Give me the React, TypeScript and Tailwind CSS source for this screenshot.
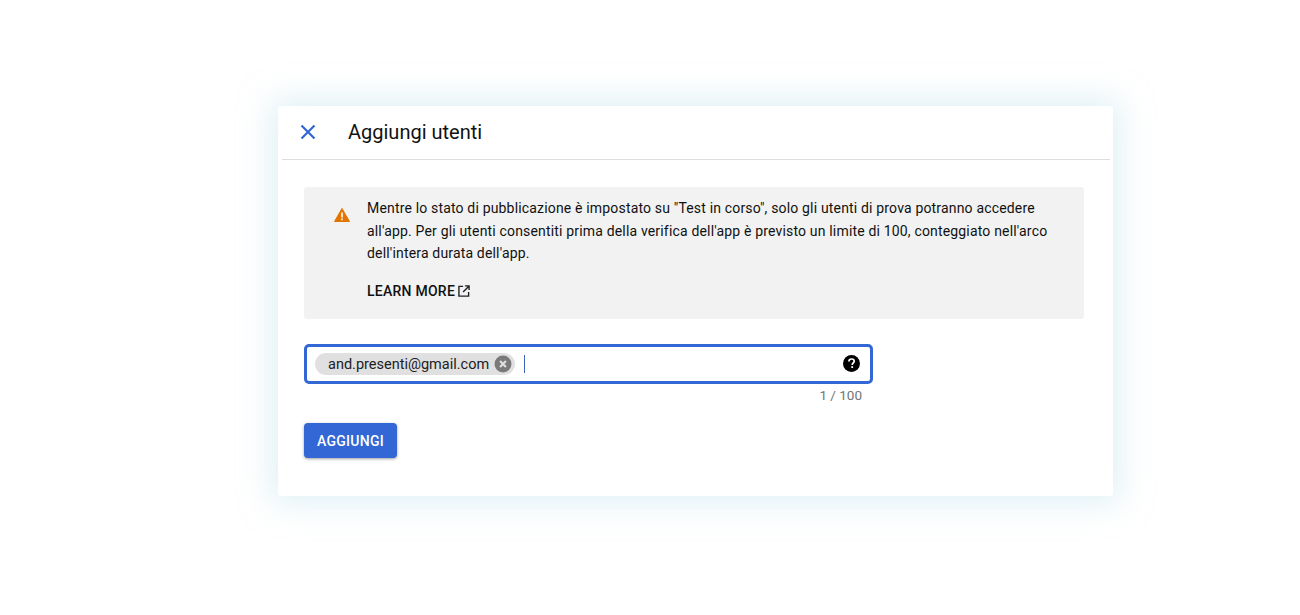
export default function App() {
  return (
    <div className="min-h-[615px] bg-white pt-[106px] pl-[278px] font-['Roboto',sans-serif] overflow-hidden">
      <div className="w-[835px] h-[390px] bg-white rounded-[3px] shadow-[0_0_32px_6px_rgba(190,226,238,0.5)]">
        {/* header */}
        <div className="ml-[4px] mr-[3px] h-[54px] border-b border-[#dedede] flex items-center pb-[2px]">
          <svg className="ml-[16px] w-[20px] h-[20px]" viewBox="0 0 20 20" fill="none" stroke="#3367d6" strokeWidth="2.2">
            <path d="M3.5 3.5 L16.5 16.5 M16.5 3.5 L3.5 16.5" />
          </svg>
          <h1 className="ml-[30px] text-[20px] leading-[26px] text-[#111111]">Aggiungi utenti</h1>
        </div>

        <div className="px-[26px] pt-[27px]">
          {/* warning box */}
          <div className="w-[780px] h-[132px] bg-[#f2f2f2] rounded-[3px] flex pl-[29px] pt-[10px]">
            <svg className="mt-[10px] w-[18px] h-[16px] shrink-0" viewBox="0 0 18 16">
              <path d="M9 1.5 L16.5 14.5 H1.5 Z" fill="#e37400" stroke="#e37400" strokeLinejoin="round" />
              <rect x="8.2" y="5.5" width="1.6" height="5" fill="#fff" />
              <rect x="8.2" y="11.5" width="1.6" height="1.7" fill="#fff" />
            </svg>
            <div className="ml-[16px] w-[690px]">
              <p className="text-[14px] leading-[22.5px] tracking-[0.17px] text-[#111111]">
                Mentre lo stato di pubblicazione è impostato su "Test in corso", solo gli utenti di prova potranno accedere all'app. Per gli utenti consentiti prima della verifica dell'app è previsto un limite di 100, conteggiato nell'arco dell'intera durata dell'app.
              </p>
              <div className="mt-[16px] flex items-center text-[14px] leading-[20px] tracking-[0.25px] font-medium text-[#111111]">
                LEARN MORE
                <svg className="ml-[3px] w-[12px] h-[12px]" viewBox="0 0 13 13" fill="none" stroke="#202124" strokeWidth="1.5">
                  <path d="M5.5 1.5 H1 V12 H11.5 V7.5 M7.5 1 H12 V5.5 M12 1 L5.5 7.5" />
                </svg>
              </div>
            </div>
          </div>

          {/* chip input */}
          <div className="mt-[25px] w-[569px] h-[40px] border-[3px] border-[#3367d6] rounded-[5px] flex items-center pl-[8px] pr-[10px]">
            <div className="h-[22px] pl-[13px] pr-[3px] bg-[#e0e0e0] rounded-full flex items-center">
              <span className="text-[14.5px] leading-[22px] pt-[1px] text-[#202124] whitespace-nowrap">and.presenti@gmail.com</span>
              <svg className="ml-[5px] w-[18px] h-[18px]" viewBox="0 0 17 17">
                <circle cx="8.5" cy="8.5" r="8" fill="#7a7a7a" />
                <path d="M5.7 5.7 L11.3 11.3 M11.3 5.7 L5.7 11.3" stroke="#e0e0e0" strokeWidth="2" />
              </svg>
            </div>
            <div className="ml-[9px] w-px h-[18px] bg-[#3f63b8]" />
            <svg className="ml-auto mb-[2px] w-[17px] h-[17px]" viewBox="0 0 17 17">
              <circle cx="8.5" cy="8.5" r="8.5" fill="#000" />
              <path d="M5.9 6.6 C5.9 5 7.1 4 8.6 4 C10.1 4 11.2 5 11.2 6.3 C11.2 7.9 9.2 8.1 9.2 9.9" fill="none" stroke="#fff" strokeWidth="1.7" />
              <rect x="8.3" y="11.2" width="1.8" height="1.8" fill="#fff" />
            </svg>
          </div>
          <div className="w-[558px] mt-[3px] mb-[1px] text-right text-[13.5px] leading-[16px] text-[#70757a]">1 / 100</div>

          {/* submit */}
          <button className="mt-[19px] w-[93px] h-[35px] pt-[1px] bg-[#3367d6] rounded-[4px] text-white text-[14px] tracking-[0.25px] font-medium shadow-[0_1px_3px_rgba(60,64,67,0.5)]">
            AGGIUNGI
          </button>
        </div>
      </div>
    </div>
  );
}
